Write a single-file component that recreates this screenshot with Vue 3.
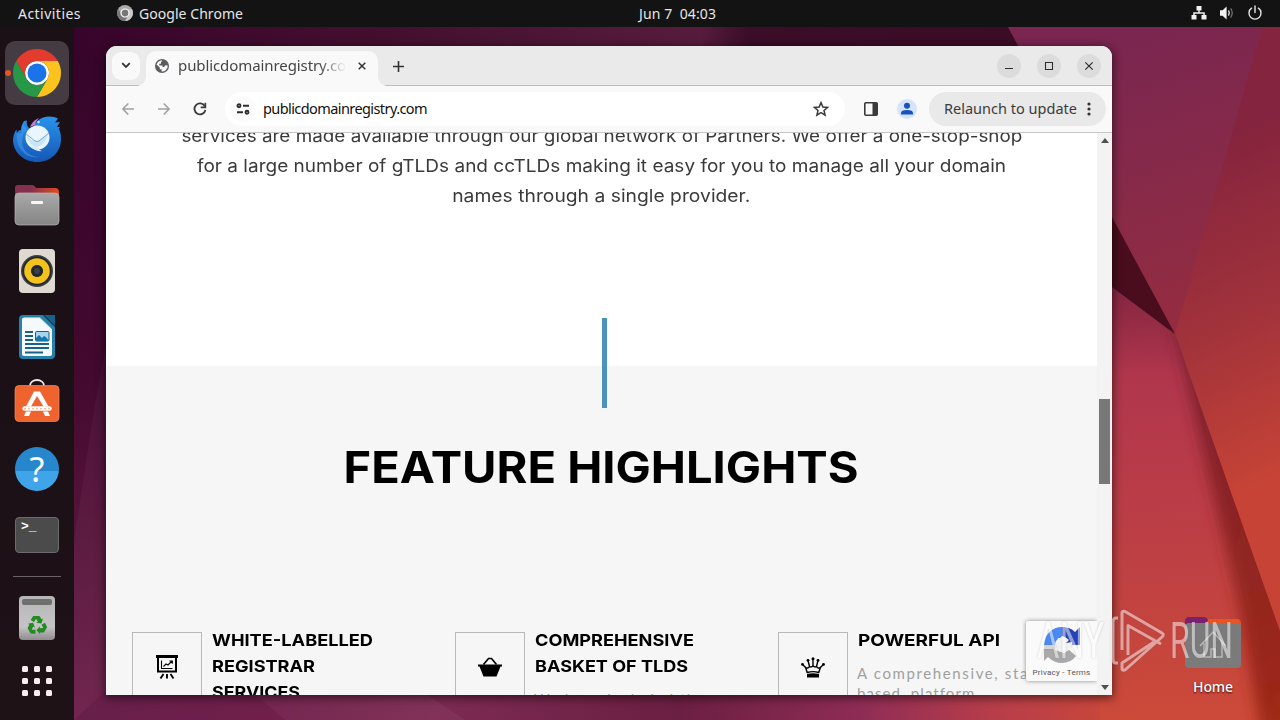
<script setup>
// ! define params
const params = {
	pageUrl: 'publicdomainregistry.com',
	intro: [
		{ text: 'services are made available through our global network of Partners. We offer a one-stop-shop', width: 841 },
		{ text: 'for a large number of gTLDs and ccTLDs making it easy for you to manage all your domain', width: 809 },
		{ text: 'names through a single provider.', width: 298 },
	],
	features: [
		{
			icon: 'chart',
			title: [
				{ text: 'WHITE-LABELLED', width: 161 },
				{ text: 'REGISTRAR', width: 103 },
				{ text: 'SERVICES', width: 88 },
			],
			desc: [],
		},
		{
			icon: 'basket',
			title: [
				{ text: 'COMPREHENSIVE', width: 159 },
				{ text: 'BASKET OF TLDS', width: 153 },
			],
			desc: [{ text: 'We have included the', width: 172 }],
		},
		{
			icon: 'crown',
			title: [{ text: 'POWERFUL API', width: 142 }],
			desc: [
				{ text: 'A comprehensive, standards', width: 226 },
				{ text: 'based\u00a0 platform', width: 118 },
			],
		},
	],
};

// ! directives
// spreads the letters so that a line takes the given width
const vFit = {
	mounted: (el, { value }) => {
		const natural = el.getBoundingClientRect().width;
		el.style.letterSpacing = `${(value - natural) / el.textContent.length}px`;
	},
};

// widens the letters themselves instead of the gaps between them
const vStretch = {
	mounted: (el, { value }) => {
		el.style.transform = `scaleX(${value / el.getBoundingClientRect().width})`;
	},
};
</script>

<template>
	<div class="desktop">
		<svg class="wallpaper" width="1280" height="720" viewBox="0 0 1280 720">
			<defs>
				<linearGradient id="base" gradientUnits="userSpaceOnUse" x1="74" y1="30" x2="74" y2="720">
					<stop offset="0" stop-color="#35042a" />
					<stop offset=".5" stop-color="#43092f" />
					<stop offset="1" stop-color="#6d1f4a" />
				</linearGradient>
				<linearGradient id="top" x1="0" x2="1">
					<stop offset="0" stop-color="#38042b" />
					<stop offset=".35" stop-color="#45102f" />
					<stop offset=".66" stop-color="#571c3d" />
					<stop offset=".71" stop-color="#3b0d28" />
					<stop offset="1" stop-color="#3b0c26" />
				</linearGradient>
				<linearGradient id="bottom" gradientUnits="userSpaceOnUse" x1="74" y1="0" x2="1280" y2="0">
					<stop offset="0" stop-color="#66204a" />
					<stop offset=".16" stop-color="#701f4a" />
					<stop offset=".3" stop-color="#7d2a52" />
					<stop offset=".5" stop-color="#6b1f42" />
					<stop offset=".65" stop-color="#8e2c56" />
					<stop offset=".76" stop-color="#b63d4a" />
					<stop offset=".86" stop-color="#c9473b" />
					<stop offset="1" stop-color="#c84630" />
				</linearGradient>
				<linearGradient id="facetTop" gradientUnits="userSpaceOnUse" x1="1100" y1="50" x2="1190" y2="320">
					<stop offset="0" stop-color="#7a2650" />
					<stop offset=".5" stop-color="#872a49" />
					<stop offset="1" stop-color="#942c40" />
				</linearGradient>
				<linearGradient id="facetRight" gradientUnits="userSpaceOnUse" x1="1175" y1="160" x2="1310" y2="460">
					<stop offset="0" stop-color="#85243e" />
					<stop offset=".5" stop-color="#a0323b" />
					<stop offset="1" stop-color="#c64336" />
				</linearGradient>
				<linearGradient id="facetMid" gradientUnits="userSpaceOnUse" x1="1140" y1="290" x2="1160" y2="720">
					<stop offset="0" stop-color="#852640" />
					<stop offset=".2" stop-color="#b0364d" />
					<stop offset=".55" stop-color="#bc3e45" />
					<stop offset="1" stop-color="#cc4a39" />
				</linearGradient>
				<linearGradient id="ridge" gradientUnits="userSpaceOnUse" x1="1180" y1="350" x2="1280" y2="720">
					<stop offset="0" stop-color="#7d2030" />
					<stop offset="1" stop-color="#9f2917" />
				</linearGradient>
				<filter id="soft" x="-30%" y="-10%" width="160%" height="120%"><feGaussianBlur stdDeviation="7" /></filter>
				<clipPath id="ridgeClip"><path d="M1100 280 1175 334 1280 631V720H1100z" /></clipPath>
			</defs>
			<rect width="1280" height="720" fill="url(#base)" />
			<path d="M106 345 94 410 74 540V720H106z" fill="#fff" opacity=".035" />
			<rect x="74" y="27" width="950" height="30" fill="url(#top)" />
			<path d="M106 690H1280V720H74z" fill="url(#bottom)" />
			<path d="M250 690H420L465 720H285z" fill="#fff" opacity=".04" />
			<path d="M1008 27H1280V340H1175z" fill="url(#facetTop)" />
			<path d="M1262 27H1280V640L1175 334z" fill="url(#facetRight)" />
			<path d="M1100 278 1175 334 1280 631V720H1100z" fill="url(#facetMid)" />
			<g clip-path="url(#ridgeClip)">
				<path d="M1172 320 1205 460 1238 600 1262 740H1310V631L1190 330z" fill="url(#ridge)" filter="url(#soft)" />
			</g>
			<path d="M1105 204 1175 334 1105 281z" fill="#4a0d1d" />
		</svg>

		<header class="topbar">
			<span v-fit="63" class="activities">Activities</span>
			<div class="current-app">
				<svg width="16" height="16" viewBox="0 0 16 16">
					<circle cx="8" cy="8" r="8" fill="#a9a9a9" />
					<path d="M8 4.2h7A8 8 0 0 1 8 16l3.4-6z" fill="#c9c9c9" />
					<path d="M1.2 4A8 8 0 0 0 8 16l3.3-6-6.6 0z" fill="#777" />
					<circle cx="8" cy="8" r="4" fill="#777" stroke="#fff" stroke-width="1.2" />
				</svg>
				<span v-fit="104">Google Chrome</span>
			</div>
			<span v-fit="77" class="clock">Jun 7&nbsp; 04:03</span>
			<div class="tray">
				<svg width="16" height="16" viewBox="0 0 16 16" fill="#f2f2f2">
					<path d="M5.5 1h5v4.5H8.7V7.3H13.8V10H15.5V14.5H10.5V10h1.8V8.7H3.7V10H5.5V14.5H.5V10H2.2V7.3H7.3V5.5H5.5z" />
				</svg>
				<svg width="16" height="16" viewBox="0 0 16 16">
					<path d="M1 5.2h2.6L7.6 1.5v13L3.6 10.8H1z" fill="#f2f2f2" />
					<path d="M9.5 5.3q1.6 2.7 0 5.4" fill="none" stroke="#ddd" stroke-width="1.4" />
					<path d="M11.7 3.4q3 4.6 0 9.2" fill="none" stroke="#777" stroke-width="1.2" />
				</svg>
				<svg width="16" height="16" viewBox="0 0 16 16" fill="none" stroke="#e8e8e8" stroke-width="1.4" stroke-linecap="round">
					<path d="M4.6 3.2a6 6 0 1 0 6.8 0M8 1v6.5" />
				</svg>
			</div>
		</header>

		<nav class="dock">
			<div class="dock-item active">
				<svg width="48" height="48" viewBox="0 0 48 48">
					<circle cx="24" cy="24" r="12" fill="#fff" />
					<path d="M24 12h20.78a24 24 0 0 0-41.56 0L13.61 30A12 12 0 0 1 24 12z" fill="#e33b2e" />
					<path d="M34.39 30 24 48A24 24 0 0 0 44.78 12H24A12 12 0 0 1 34.39 30z" fill="#fcc31e" />
					<path d="M13.61 30 3.22 12A24 24 0 0 0 24 48L34.39 30a12 12 0 0 1-20.78 0z" fill="#279847" />
					<circle cx="24" cy="24" r="9.5" fill="#1a73e8" />
				</svg>
			</div>
			<div class="dock-item">
				<svg width="48" height="48" viewBox="0 0 48 48">
					<defs>
						<linearGradient id="bird" x1="0" y1="0" x2="0" y2="1">
							<stop offset="0" stop-color="#2a93ec" />
							<stop offset="1" stop-color="#1557b5" />
						</linearGradient>
					</defs>
					<path d="M11 6C9 9 8 12 8 15c-2 0-3 1-4 3-.5-1.500-.5-3 0-4C1 17 0 22 0 26c1 12 11 21 24 21 14 0 24-10 24-23 0-5-1-8-2-10l1-2h-3l3-5-5 .5 3-4c-5-3-15-3-20 2-3 3-4 6-8 8-2-1-4-4-3-8z" fill="url(#bird)" />
					<path d="M4 18c-1 8 1 14 7 20 4 4 10 5 15 4-10-1-16-6-17-14 0-5 1-10 5-13l-4-6c-2 4-2 7-1 9-2 0-4 1-5 0z" fill="#4aa0f3" opacity=".5" />
					<path d="M17 12c2-5 6-8 9-9-3 3-4 6-4 7z" fill="#c979d9" />
					<ellipse cx="24.500" cy="22.500" rx="12" ry="12" fill="#eaf6fd" />
					<path d="M13 20q5 6 11 7 7-4 11-9-2 12-11 14-8-1-11-12z" fill="#c8e5f8" />
					<path d="M13 19l9 7q2 1 4 0l10-8" fill="none" stroke="#7aa7cc" />
					<path d="M17 31q5 6 12 5-3-1-4-4z" fill="#d5ecfb" />
					<circle cx="25.500" cy="7" r="1.300" fill="#c3e3ff" />
				</svg>
			</div>
			<div class="dock-item">
				<svg width="46" height="42" viewBox="0 0 46 42">
					<defs>
						<linearGradient id="folderBack" x1="0" x2="1">
							<stop offset=".35" stop-color="#85304f" />
							<stop offset="1" stop-color="#e44c1d" />
						</linearGradient>
						<linearGradient id="folderFront" x1="0" y1="0" x2="0" y2="1">
							<stop offset="0" stop-color="#a9a9a9" />
							<stop offset="1" stop-color="#858585" />
						</linearGradient>
					</defs>
					<path d="M1 4q0-3 3-3h14q2 0 3 1.500L22 4h19q4 0 4 4v12H1z" fill="url(#folderBack)" />
					<rect x="1" y="9" width="44" height="32" rx="4" fill="url(#folderFront)" stroke="#b7b7b7" stroke-width=".7" />
					<rect x="17" y="17" width="12" height="3" rx="1" fill="#f7f7f7" />
				</svg>
			</div>
			<div class="dock-item">
				<svg width="38" height="46" viewBox="0 0 38 46">
					<rect x="1" y="1" width="36" height="44" rx="4" fill="#dfdad1" />
					<circle cx="19" cy="23" r="16" fill="#3c4147" />
					<circle cx="19" cy="23" r="14.600" fill="#24282b" />
					<circle cx="19" cy="23" r="9.300" fill="none" stroke="#f3c31b" stroke-width="7" />
					<circle cx="19" cy="23" r="6" fill="#24282b" />
					<circle cx="19" cy="23" r="3" fill="#394149" />
				</svg>
			</div>
			<div class="dock-item">
				<svg width="38" height="46" viewBox="0 0 38 46">
					<path d="M5 1H25L37 13V41q0 4-4 4H5q-4 0-4-4V5q0-4 4-4z" fill="#2482aa" />
					<path d="M26 1H37V12z" fill="#17618a" />
					<path d="M6 3.500H22L34 15v25q0 2-2 2H6q-2 0-2-2V5.500q0-2 2-2z" fill="#f6f9fb" />
					<path d="M22 3.500 34 15" stroke="#61a4c3" stroke-width="1" />
					<path d="M7 18h8M7 22h8M7 26h8M7 30h24M7 34h24M7 38.500h18" stroke="#17618a" stroke-width="1.800" />
					<rect x="17.500" y="17.500" width="13.500" height="9.500" rx="1" fill="#a7d4ef" stroke="#17618a" />
					<path d="M18 27v-3l3-3 3 3 2-2 2 1 3 4z" fill="#1777aa" />
				</svg>
			</div>
			<div class="dock-item">
				<svg width="46" height="48" viewBox="0 0 46 48">
					<path d="M16 7.500v-1a7 5.500 0 0 1 14 0v1" fill="none" stroke="#f4e7df" stroke-width="1.800" />
					<rect x="1" y="6.500" width="44" height="36" rx="4" fill="#ef632f" stroke="#f5895f" stroke-width=".7" />
					<path d="M10.500 29.500H35.500" stroke="#fff" stroke-width="4.400" stroke-linecap="round" />
					<path d="M10 29.800H36" stroke="#ef632f" stroke-width=".6" stroke-dasharray="2 2" />
					<path d="M20 12.500h6L34.500 27.500h-5L23 17l-6 10.500h-5zM12 32.500h5l-2 4.500h-5zM29 32.500h5l2 4.500h-5z" fill="#fff" />
				</svg>
			</div>
			<div class="dock-item">
				<div class="help">?</div>
			</div>
			<div class="dock-item">
				<div class="terminal">&gt;_</div>
			</div>
			<hr class="dock-line" />
			<div class="dock-item trash">
				<svg width="38" height="46" viewBox="0 0 38 46">
					<defs>
						<linearGradient id="bin" x1="0" y1="0" x2="0" y2="1">
							<stop offset="0" stop-color="#b6b6b6" />
							<stop offset=".7" stop-color="#c6c3c5" />
							<stop offset="1" stop-color="#8f8b8e" />
						</linearGradient>
					</defs>
					<rect x="1" y="1" width="36" height="44" rx="4" fill="url(#bin)" />
					<rect x="4" y="4" width="30" height="6" rx="2" fill="#6f6f6f" />
					<g fill="#218a21">
						<g v-for="turn in [0, 120, 240]" :key="turn" :transform="`rotate(${turn} 19 30.500)`">
							<path d="M15.200 21h6.300l2 3.300 1.500-.9-1.600 5.100-5.200-.8 1.700-1-1.900-3-2 3.300-3.300-2z" />
						</g>
					</g>
				</svg>
			</div>
			<div class="dock-item apps">
				<i v-for="n in 9" :key="n"></i>
			</div>
		</nav>

		<div class="home">
			<svg width="56" height="52" viewBox="0 0 56 52">
				<path d="M0 5q0-4 4-4h15q3 0 4 2h29q4 0 4 5v10H0z" fill="#e95420" />
				<path d="M0 5q0-4 4-4h15q3 0 4 3l-3 6H0z" fill="#77216f" />
				<rect y="7" width="56" height="45" rx="4" fill="#7b7b7b" />
				<path d="M15 30 28 16 41 30M19 27v14h7v-8h4v8h7V27" fill="none" stroke="#b9b9b9" stroke-width="1.500" />
			</svg>
			<span v-fit="40">Home</span>
		</div>

		<main class="window">
			<div class="tabstrip">
				<div class="tab-search">
					<svg width="10" height="7" viewBox="0 0 10 7"><path d="M1.200 1.200 5 5l3.800-3.800" fill="none" stroke="#333" stroke-width="1.800" /></svg>
				</div>
				<div class="tab">
					<svg width="14" height="14" viewBox="0 0 14 14">
						<circle cx="7" cy="7" r="7" fill="#5b5d60" />
						<path d="M7.300 1.500 6 3.300v1.400H4.300v1.900h3.200v1.500h1.600l1.400-1.800 2.200.2q.2 3.200-2 4.700Q9 12.800 6.600 12.600V10.200H4.800V8.400L1.500 5.600Q2.500 2.300 5.500 1.500z" fill="#f9f9f9" />
						<path d="M7.400 2.300 9.600 3 9.300 4.600 7.600 5z" fill="#5b5d60" />
					</svg>
					<div class="tab-title"><span v-fit="182">{{ params.pageUrl }}</span></div>
					<svg width="8" height="8" viewBox="0 0 8 8"><path d="M.7.700l6.600 6.600M7.300.7.700 7.300" stroke="#333" stroke-width="1.500" /></svg>
				</div>
				<svg class="new-tab" width="11" height="11" viewBox="0 0 11 11"><path d="M5.500 0v11M0 5.500h11" stroke="#333" stroke-width="1.600" /></svg>
				<div class="window-controls">
					<button><svg width="10" height="10" viewBox="0 0 10 10"><path d="M1 7.500h8" stroke="#2e2e2e" /></svg></button>
					<button><svg width="10" height="10" viewBox="0 0 10 10"><path d="M1.500 1.500h7v7h-7z" fill="none" stroke="#2e2e2e" stroke-width="1.100" /></svg></button>
					<button><svg width="10" height="10" viewBox="0 0 10 10"><path d="M1.300 1.300l7.400 7.400M8.700 1.300 1.300 8.700" stroke="#2e2e2e" stroke-width="1.200" /></svg></button>
				</div>
			</div>

			<div class="toolbar">
				<svg class="back" width="12" height="12" viewBox="0 0 12 12"><path d="M12 6H1.200M6.300.5.900 6l5.400 5.500" fill="none" stroke="#a2a2a2" stroke-width="1.600" /></svg>
				<svg class="forward" width="12" height="12" viewBox="0 0 12 12"><path d="M0 6h10.800M5.700.5 11.100 6l-5.400 5.500" fill="none" stroke="#a2a2a2" stroke-width="1.600" /></svg>
				<svg class="reload" width="14" height="14" viewBox="0 0 14 14">
					<path d="M11.800 4.200A5.500 5.500 0 1 0 12.400 8" fill="none" stroke="#3a3a3a" stroke-width="1.800" />
					<path d="M13.200.7v5.500H7.700V4.600h3.800V.7z" fill="#3a3a3a" />
				</svg>
				<div class="omnibox">
					<div class="site-info">
						<svg width="14" height="12" viewBox="0 0 14 12" fill="none" stroke="#2f2f2f" stroke-width="1.900">
							<circle cx="3" cy="2.800" r="1.500" /><path d="M7 2.800h6M1 9.200h6" /><circle cx="11" cy="9.200" r="1.500" />
						</svg>
					</div>
					<span v-fit="164" class="url">{{ params.pageUrl }}</span>
					<svg class="star" width="16" height="16" viewBox="0 0 16 16"><path d="M8 1.600 9.900 6l4.700.4-3.600 3.100 1.100 4.600L8 11.700l-4.100 2.400L5 9.500 1.400 6.400 6.100 6z" fill="none" stroke="#3a3a3a" stroke-width="1.500" /></svg>
				</div>
				<svg class="side-panel" width="14" height="14" viewBox="0 0 14 14"><rect x=".8" y=".8" width="12.400" height="12.400" rx="1" fill="none" stroke="#3a3a3a" stroke-width="1.600" /><path d="M8.500 1H13v12H8.500z" fill="#3a3a3a" /></svg>
				<svg class="profile" width="20" height="20" viewBox="0 0 20 20"><circle cx="10" cy="10" r="10" fill="#d5e3fb" /><circle cx="10" cy="6.800" r="3" fill="#1652c0" /><path d="M4 15.500V14.200Q4 11 10 11T16 14.200V15.500z" fill="#1652c0" /></svg>
				<div class="relaunch">
					<span v-fit="133">Relaunch to update</span>
					<svg width="4" height="14" viewBox="0 0 4 14" fill="#333"><circle cx="2" cy="2" r="1.600" /><circle cx="2" cy="7" r="1.600" /><circle cx="2" cy="12" r="1.600" /></svg>
				</div>
			</div>

			<div class="viewport">
				<div class="page">
					<section class="intro">
						<p v-for="line in params.intro" :key="line.text"><span v-stretch="line.width">{{ line.text }}</span></p>
					</section>
					<section class="highlights">
						<div class="accent"></div>
						<h2><span v-stretch="515">FEATURE HIGHLIGHTS</span></h2>
						<div class="features">
							<article v-for="feature in params.features" :key="feature.icon" class="feature">
								<div class="feature-icon">
									<svg v-if="feature.icon === 'chart'" width="24" height="26" viewBox="0 0 24 26">
										<path d="M1 1h22v3H1z" />
										<path d="M3 4v13.500h18V4" fill="none" stroke="#000" stroke-width="2" />
										<path d="M6.500 6.500v8h11M8.500 12.500l2.500-2.500 2 1 4-4M14.500 7h2.800v2.800" fill="none" stroke="#000" stroke-width="1.100" />
										<path d="M8.500 20 5.500 24.500M12 20v4.500M15.500 20l3 4.500" stroke="#000" stroke-width="1.900" />
									</svg>
									<svg v-else-if="feature.icon === 'basket'" width="24" height="20" viewBox="0 0 24 20">
										<path d="M5.500 7.500 10.500 1.500h3l5 6" fill="none" stroke="#000" stroke-width="1.700" />
										<path d="M0 7.500h24v2h-1.500L18.500 19.500h-13L1.500 9.500H0z" />
									</svg>
									<svg v-else width="24" height="21" viewBox="0 0 24 21">
										<g fill="none" stroke="#000" stroke-width="1.400" stroke-linejoin="round">
											<path d="M6.200 15.500 4.600 10.500Q7 12 8.500 9.500 10.300 10.600 12 8.800 13.700 10.600 15.500 9.500 17 12 19.400 10.500L17.800 15.500Q12 13.700 6.200 15.500z" />
											<path d="M1.600 7.500 4.600 10.600M7 3.500 8.500 9.500M12 2v6.800M17 3.500 15.500 9.500M22.400 7.500 19.400 10.600" />
										</g>
										<path d="M6 17q6-1.500 12 0v3.500H6z" />
										<circle cx="12" cy="1.700" r="1.500" /><circle cx="7" cy="3.300" r="1.400" /><circle cx="17" cy="3.300" r="1.400" /><circle cx="1.500" cy="7.400" r="1.400" /><circle cx="22.500" cy="7.400" r="1.400" />
									</svg>
								</div>
								<div class="feature-body">
									<h3><div v-for="line in feature.title" :key="line.text"><span v-stretch="line.width">{{ line.text }}</span></div></h3>
									<p v-for="line in feature.desc" :key="line.text"><span v-fit="line.width">{{ line.text }}</span></p>
								</div>
							</article>
						</div>
					</section>
					<aside class="captcha">
						<svg width="38" height="38" viewBox="0 0 38 38">
							<path d="M1 19A18 18 0 0 1 19 1v9l-3 3q-4 1-4 6z" fill="#4a8af4" />
							<path d="M19 1q8 0 13 5l5-5v18H21l5-5q-3-3-7-4z" fill="#2443b8" />
							<path d="M1 19h11q1 6 7 7 4 0 6-3l8 7Q28 37 19 37q-8 0-14-6l-4 4z" fill="#a9a9a9" />
							<path d="M15 12h8v5l6-1v6l-8 5-9-3z" fill="#f3f3f3" />
						</svg>
						<span v-fit="58">Privacy - Terms</span>
					</aside>
				</div>
				<div class="scrollbar">
					<i class="arrow up"></i>
					<div class="thumb"></div>
					<i class="arrow down"></i>
				</div>
			</div>
		</main>

		<svg class="watermark" width="200" height="70" viewBox="1035 605 200 70">
			<g class="mark-text">
				<text x="1037" y="658" textLength="67" lengthAdjust="spacingAndGlyphs">ANY</text>
				<text x="1170" y="658" textLength="63" lengthAdjust="spacingAndGlyphs">RUN</text>
			</g>
			<g class="mark-play">
				<path d="M1122 650V612.500q1-2 3-1L1162 633q2.500 1.500 0 4L1125 670q-2 1-3-1v-6L1154 642" />
				<path d="M1118 618h-2q-3 0-3 4v37q0 4 3 4h2M1128 655V625.500L1161 644" />
			</g>
		</svg>
	</div>
</template>

<style>
body {
	margin: 0;
	overflow: hidden;
}
</style>

<style scoped>
* {
	box-sizing: border-box;
}

svg {
	display: block;
	flex: none;
}

span {
	display: inline-block;
	white-space: nowrap;
}

.desktop {
	position: relative;
	width: 1280px;
	height: 720px;
	overflow: hidden;
	font-family: "Noto Sans", sans-serif;
	font-size: 14.500px;
}

.wallpaper {
	position: absolute;
	inset: 0;
}

.topbar {
	position: relative;
	display: grid;
	grid-template-columns: 117px 522px 1fr auto;
	align-items: center;
	height: 27px;
	padding-right: 17px;
	padding-bottom: 1px;
	background: #131313;
	color: #e6e6e6;
	font-size: 14px;
}

.activities {
	justify-self: start;
	margin-left: 18px;
}

.current-app {
	display: flex;
	align-items: center;
	gap: 6px;
}

.clock {
	justify-self: start;
}

.tray {
	display: flex;
	gap: 12px;
}

/* dock */
.dock {
	position: relative;
	display: flex;
	flex-direction: column;
	align-items: center;
	width: 74px;
	height: 693px;
	padding-top: 13px;
	background: rgba(24, 17, 20, .92);
}

.dock-item {
	display: flex;
	flex: none;
	align-items: center;
	justify-content: center;
	width: 64px;
	height: 64px;
	margin: 1px 0;
	border-radius: 10px;
}

.dock-item.active {
	position: relative;
	background: #443c42;
}

.dock-item.active::before {
	content: "";
	position: absolute;
	left: 0;
	top: 29px;
	width: 6px;
	height: 6px;
	border-radius: 50%;
	background: #e95420;
}

.help {
	width: 44px;
	height: 44px;
	border-radius: 50%;
	background: linear-gradient(#2787cd 55%, #40a5e8 55%);
	color: #fff;
	font-size: 34px;
	line-height: 44px;
	text-align: center;
}

.terminal {
	width: 44px;
	height: 36px;
	padding: 0 5px;
	border: 1px solid #6b6b6b;
	border-radius: 4px;
	background: #4b4b4b;
	color: #fff;
	font: bold 13px/17px "Liberation Mono", monospace;
}

.dock-line {
	flex: none;
	width: 48px;
	height: 1px;
	margin: 8px 0 8px;
	border: 0;
	background: #6b6267;
}

.dock-item.apps {
	display: grid;
	grid-template-columns: repeat(3, 6px);
	gap: 6px;
	align-content: center;
	height: 60px;
	margin: 0;
}

.apps i {
	height: 6px;
	border-radius: 1.500px;
	background: #f7edf3;
}

.home {
	position: absolute;
	left: 1183px;
	top: 616px;
	display: flex;
	flex-direction: column;
	align-items: center;
	gap: 9px;
	width: 60px;
	color: #fff;
	font-size: 14px;
	font-weight: 500;
	line-height: 20px;
	text-shadow: 0 1px 2px #400;
}

/* browser window */
.window {
	position: absolute;
	left: 106px;
	top: 46px;
	display: flex;
	flex-direction: column;
	width: 1006px;
	height: 649px;
	border-radius: 11px 11px 0 0;
	overflow: hidden;
	background: #fff;
	box-shadow: 0 2px 10px 1px rgba(0, 0, 0, .55);
}

.tabstrip {
	display: flex;
	flex: none;
	align-items: center;
	height: 40px;
	padding: 0 11px 0 6px;
	border-bottom: 1px solid #bdbdbd;
	background: #eaeaea;
}

.tab-search {
	display: flex;
	align-items: center;
	justify-content: center;
	width: 28px;
	height: 28px;
	border-radius: 9px;
	background: #f9f9f9;
}

.tab {
	position: relative;
	display: flex;
	align-self: flex-end;
	align-items: center;
	width: 232px;
	height: 35px;
	margin: 0 0 -1px 6px;
	padding: 0 11px 5px 9px;
	border-radius: 10px 10px 0 0;
	background: #f9f9f9;
}

.tab::before,
.tab::after {
	content: "";
	position: absolute;
	bottom: 0;
	width: 9px;
	height: 9px;
}

.tab::before {
	right: 100%;
	background: radial-gradient(circle at 0 0, transparent 8.500px, #f9f9f9 9px);
}

.tab::after {
	left: 100%;
	background: radial-gradient(circle at 100% 0, transparent 8.500px, #f9f9f9 9px);
}

.tab-title {
	flex: none;
	width: 168px;
	margin: 0 12px 2px 9px;
	overflow: hidden;
	color: #454545;
	font-size: 15px;
	line-height: 20px;
	mask-image: linear-gradient(90deg, #000 84%, transparent);
}

.new-tab {
	margin-left: 15px;
	margin-top: 1px;
}

.window-controls {
	display: flex;
	gap: 16px;
	margin-left: auto;
}

.window-controls button {
	display: flex;
	align-items: center;
	justify-content: center;
	width: 24px;
	height: 24px;
	padding: 0;
	border: 0;
	border-radius: 50%;
	background: #dcdcdc;
}

.toolbar {
	display: flex;
	flex: none;
	align-items: center;
	height: 47px;
	padding: 0 6px 0 16px;
	border-bottom: 1px solid #c6c6c6;
	background: #f9f9f9;
}

.forward {
	margin-left: 24px;
}

.reload {
	margin-left: 23px;
}

.omnibox {
	display: flex;
	align-items: center;
	width: 620px;
	height: 34px;
	margin-left: 18px;
	padding: 0 16px 0 5px;
	border-radius: 17px;
	background: #fff;
}

.site-info {
	display: flex;
	align-items: center;
	justify-content: center;
	width: 26px;
	height: 26px;
	border-radius: 50%;
	background: #fbfbfb;
}

.url {
	margin-bottom: 2px;
	margin-left: 7px;
	color: #111;
}

.star {
	margin-left: auto;
}

.side-panel {
	margin-left: 19px;
}

.profile {
	margin-left: 19px;
}

.relaunch {
	display: flex;
	align-items: center;
	gap: 10px;
	width: 177px;
	height: 34px;
	margin-left: 12px;
	padding-left: 15px;
	border-radius: 17px;
	background: #e9e9e9;
	color: #3b3b3b;
}

.relaunch span {
	margin-bottom: 2px;
}

.viewport {
	display: flex;
	flex: 1;
	min-height: 0;
}

.page {
	position: relative;
	width: 991px;
	overflow: hidden;
	font-family: Inter, sans-serif;
}

.intro {
	height: 232px;
	margin-top: -12px;
	margin-bottom: 13px;
	color: #3a3a3a;
	font-size: 17.500px;
	line-height: 30px;
	text-align: center;
}

.intro p {
	margin: 0;
}

.highlights {
	position: relative;
	height: 330px;
	padding-top: 71px;
	background: #f6f6f6;
}

.accent {
	position: absolute;
	left: 496px;
	top: -48px;
	width: 5px;
	height: 90px;
	background: #4a93bd;
}

.highlights h2 {
	margin: 0;
	color: #000;
	font-size: 43.500px;
	font-weight: 700;
	line-height: 60px;
	text-align: center;
}

.features {
	display: grid;
	grid-template-columns: repeat(3, 323px);
	margin-top: 130px;
	padding-left: 26px;
}

.feature {
	display: flex;
	gap: 10px;
}

.feature-icon {
	display: flex;
	flex: none;
	align-items: center;
	justify-content: center;
	width: 70px;
	height: 70px;
	margin-top: 5px;
	border: 1px solid #b9b9b9;
}

.feature h3 {
	margin: 0 0 10px;
	color: #000;
	font-size: 16.500px;
	font-weight: 700;
	line-height: 26px;
}

.feature h3 span {
	transform-origin: left;
}

.feature p {
	margin: 0 0 0 -1px;
	color: #a0a0a0;
	font-family: Lato, sans-serif;
	font-size: 15px;
	line-height: 20px;
}

.captcha {
	position: absolute;
	right: 0;
	bottom: 14px;
	display: flex;
	flex-direction: column;
	align-items: center;
	gap: 3px;
	width: 71px;
	height: 60px;
	padding-top: 5px;
	border-radius: 2px 0 0 2px;
	background: #fafafa;
	box-shadow: 0 0 4px #888;
	color: #555;
	font-family: Roboto, sans-serif;
	font-size: 8px;
	line-height: 12px;
}

.scrollbar {
	display: flex;
	flex-direction: column;
	align-items: center;
	width: 15px;
	padding: 5px 0;
	background: #f3f3f3;
}

.thumb {
	flex: none;
	width: 11px;
	height: 85px;
	margin-top: 256px;
	background: #787878;
}

.arrow {
	border: 4px solid transparent;
}

.arrow.up {
	border-top: 0;
	border-bottom: 5px solid #505050;
}

.arrow.down {
	margin-top: auto;
	border-top: 5px solid #505050;
	border-bottom: 0;
}

.watermark {
	position: absolute;
	left: 1035px;
	top: 605px;
	opacity: .5;
	filter: drop-shadow(0 0 1px rgba(90, 90, 90, .5));
}

.mark-text {
	fill: #fff;
	font: 400 50px Roboto, sans-serif;
}

.mark-play {
	fill: none;
	stroke: #fff;
	stroke-width: 3px;
	stroke-linejoin: round;
}
</style>
